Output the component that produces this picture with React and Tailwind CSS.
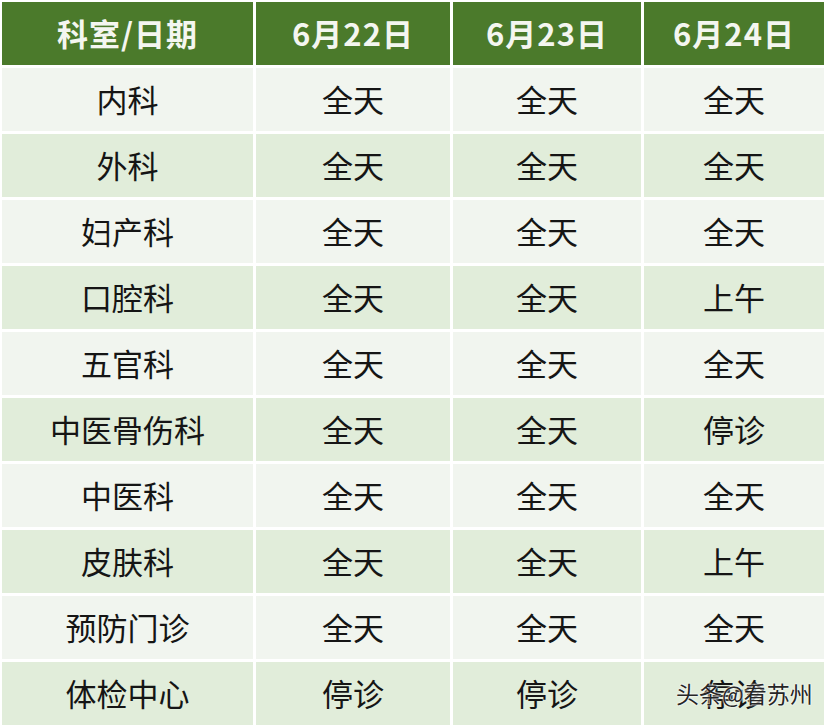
import React from "react";

const header = ["科室/日期", "6月22日", "6月23日", "6月24日"];
const rows = [
  ["内科", "全天", "全天", "全天"],
  ["外科", "全天", "全天", "全天"],
  ["妇产科", "全天", "全天", "全天"],
  ["口腔科", "全天", "全天", "上午"],
  ["五官科", "全天", "全天", "全天"],
  ["中医骨伤科", "全天", "全天", "停诊"],
  ["中医科", "全天", "全天", "全天"],
  ["皮肤科", "全天", "全天", "上午"],
  ["预防门诊", "全天", "全天", "全天"],
  ["体检中心", "停诊", "停诊", "停诊"],
];

export default function App() {
  return (
    <div
      className="relative w-[826px] h-[728px] bg-white overflow-hidden"
      style={{ fontFamily: '"Noto Sans CJK SC", "Noto Sans", sans-serif' }}
    >
      <div className="grid grid-cols-[251px_194px_188px_180px] auto-rows-[63px] gap-[3px] pt-[2px] pl-[2px]">
        {header.map((h, i) => (
          <div
            key={"h" + i}
            className="flex items-center justify-center bg-[#4b7a2b] text-[#f4f6f0] text-[31px] font-bold tracking-[1px]"
          >
            {h}
          </div>
        ))}
        {rows.map((r, ri) =>
          r.map((c, ci) => (
            <div
              key={ri + "-" + ci}
              className={
                "flex items-center justify-center text-[31px] text-[#151515] " +
                (ri % 2 === 0 ? "bg-[#f1f5ef]" : "bg-[#e1edda]")
              }
            >
              {c}
            </div>
          ))
        )}
      </div>
      <div
        className="absolute left-[676px] top-[682px] text-[23px] text-[#262626] leading-none"
        style={{ textShadow: "0 0 2px #fff, 0 0 2px #fff" }}
      >
        头条@看苏州
      </div>
    </div>
  );
}
